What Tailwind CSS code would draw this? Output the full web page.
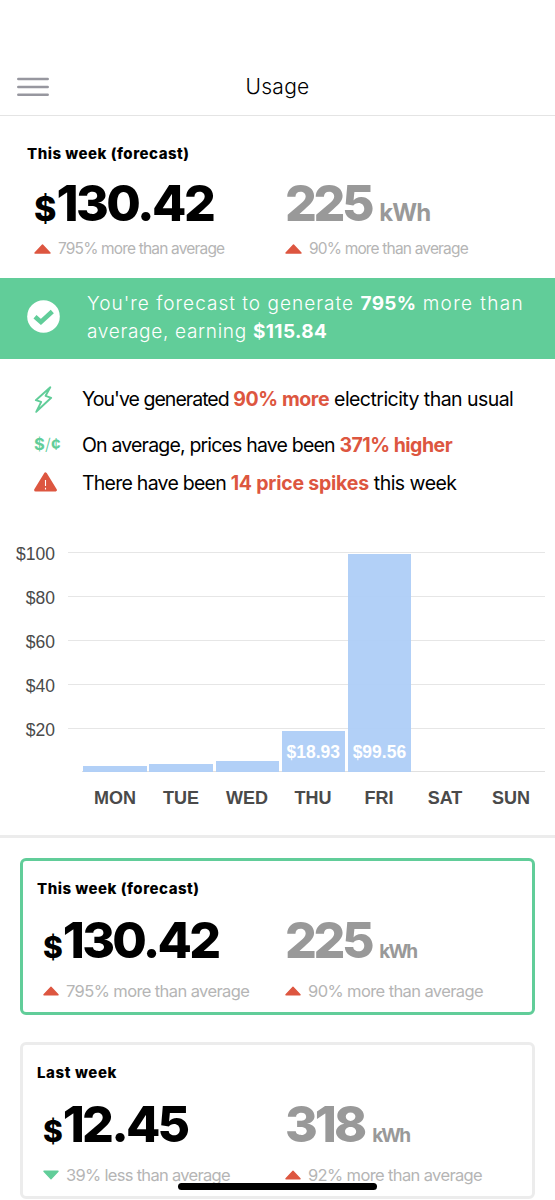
<!DOCTYPE html>
<html lang="en">

<head>
    <meta charset="UTF-8">
    <meta name="viewport" content="width=device-width, initial-scale=1.0">
    <script src="https://cdn.jsdelivr.net/npm/@tailwindcss/browser@4"></script>
    <title>Usage</title>
</head>

<body class="relative h-[1200px] overflow-hidden bg-white font-['Inter',sans-serif] text-black">
    <header class="flex h-[116px] items-end border-b border-[#e4e4e4] px-[17px] pb-[15px]">
        <button class="mb-1 h-5 w-8" aria-label="Menu">
            <svg class="h-5 w-8" viewBox="0 0 32 20"><path d="M1.3 3.1h29.4M1.3 10.9h29.4M1.3 18.7h29.4" stroke="#97979f" stroke-width="2.5" stroke-linecap="round"/></svg>
        </button>
        <h1 class="flex-1 pr-[32px] text-center text-[21px] leading-[26px] font-light tracking-[0.3px]">Usage</h1>
    </header>

    <!-- summary -->
    <section class="h-[162px] pt-7">
        <h2 class="pl-[27px] text-[15px] leading-5 font-extrabold tracking-[0.5px]">This week (forecast)</h2>
        <div class="flex pl-[34px]">
            <div class="w-[251px]">
                <div class="mt-[9px] h-[60px] whitespace-nowrap leading-[60px] font-extrabold"><span class="text-[34px]">$</span><span class="text-[50px] tracking-[-2.5px]">130.42</span></div>
                <div class="mt-1.5 flex h-5 items-center gap-[7px] text-[#b5b5b5]">
                    <svg class="h-[10px] w-[17px]" viewBox="0 0 17 10"><path d="M8.5 1 16 9H1z" fill="#dd5640" stroke="#dd5640" stroke-width="1.4" stroke-linejoin="round"/></svg>
                    <span class="text-[15.5px] tracking-[-0.83px]">795% more than average</span>
                </div>
            </div>
            <div>
                <div class="mt-[9px] h-[60px] whitespace-nowrap leading-[60px] font-extrabold text-[#999]"><span class="text-[50px] tracking-[-3.4px]">225</span><span class="ml-2 text-[24px] font-bold tracking-[-0.9px]">kWh</span></div>
                <div class="mt-1.5 flex h-5 items-center gap-[7px] text-[#b5b5b5]">
                    <svg class="h-[10px] w-[17px]" viewBox="0 0 17 10"><path d="M8.5 1 16 9H1z" fill="#dd5640" stroke="#dd5640" stroke-width="1.4" stroke-linejoin="round"/></svg>
                    <span class="text-[15.5px] tracking-[-0.83px]">90% more than average</span>
                </div>
            </div>
        </div>
    </section>

    <!-- forecast banner -->
    <section class="flex h-[81px] items-center bg-[#61cd99] pl-[27px] text-white">
        <svg class="mt-[-4px] h-[33px] w-[33px]" viewBox="0 0 33 33"><circle cx="16.5" cy="16.5" r="16.3" fill="#fff"/><path d="M8 16.8 13.9 22 25.3 11.5" fill="none" stroke="#61cd99" stroke-width="4.6"/></svg>
        <p class="mt-[-1px] ml-[27px] whitespace-nowrap text-[19px] leading-7 font-light tracking-[1.02px]">You're forecast to generate <b class="font-bold tracking-[0.3px]">795%</b> <span class="tracking-[1.35px]">more than</span><br><span class="tracking-[0.7px]">average, earning </span><b class="font-bold tracking-[0.4px]">$115.84</b></p>
    </section>

    <!-- insights -->
    <section class="pt-[23px] text-[19.5px] whitespace-nowrap">
        <div class="flex h-9 items-center pl-[34px]">
            <svg class="mt-[-1px] h-[27px] w-5" viewBox="0 0 20 27"><path d="M16.3 1.3 1.8 14.2l5.4 1.6L2.2 25.8l15-14-5.6-2z" fill="none" stroke="#61cd99" stroke-width="1.9" stroke-linejoin="round"/></svg>
            <p class="ml-7 tracking-[-0.55px]"><span class="tracking-[-0.97px]">You've generated </span><b class="tracking-[-0.4px] text-[#dd5640]">90% more</b> electricity than usual</p>
        </div>
        <div class="mt-[9px] flex h-9 items-center pl-[34px]">
            <span class="mt-[-2px] w-7 text-[16.5px] font-bold tracking-[0.2px] text-[#61cd99]">$<span class="font-light">/</span>¢</span>
            <p class="mt-px ml-5 tracking-[-0.82px]">On average, prices have been <b class="tracking-[-0.5px] text-[#dd5640]">371% higher</b></p>
        </div>
        <div class="mt-[3px] flex h-9 items-center pl-[34px]">
            <svg class="mt-[-4px] h-5 w-6" viewBox="0 0 24 20"><path d="M11.5 2 21.3 18H1.7z" fill="#dd5640" stroke="#dd5640" stroke-width="3.2" stroke-linejoin="round"/><path d="M11.5 8v6M11.5 15.8v1.6" stroke="#fff" stroke-width="1.1"/></svg>
            <p class="ml-6 tracking-[-0.53px]"><span class="tracking-[-0.75px]">There have been </span><b class="tracking-[-0.22px] text-[#dd5640]">14 price spikes</b> this week</p>
        </div>
    </section>

    <!-- daily chart -->
    <section class="mt-[41px] h-[295px] border-b-[3px] border-[#ececec] font-['Liberation_Sans',sans-serif] text-[#4a4a4a]">
        <div class="flex">
            <div class="grid w-[55px] grid-rows-[repeat(5,44px)] text-right text-[17.5px] leading-[22px]">
                <span>$100</span>
                <span>$80</span>
                <span>$60</span>
                <span>$40</span>
                <span>$20</span>
            </div>
            <div class="relative mt-[9px] ml-[13px] h-[221px] w-[477px]">
                <div class="grid grid-rows-[repeat(5,43.9px)]">
                    <div class="border-t border-[#e6e6e6]"></div>
                    <div class="border-t border-[#e6e6e6]"></div>
                    <div class="border-t border-[#e6e6e6]"></div>
                    <div class="border-t border-[#e6e6e6]"></div>
                    <div class="border-t border-[#e6e6e6]"></div>
                </div>
                <div class="ml-[14px] border-t border-[#e0e0e0]"></div>
                <div class="absolute bottom-px left-[15.4px] flex items-end gap-[2.7px] text-[17.5px] font-bold text-white">
                    <div class="w-[63.4px] bg-[#aecdf7]/95" style="height: 6px"></div>
                    <div class="w-[63.4px] bg-[#aecdf7]/95" style="height: 8px"></div>
                    <div class="w-[63.4px] bg-[#aecdf7]/95" style="height: 11px"></div>
                    <div class="flex w-[63.4px] items-end justify-center bg-[#aecdf7]/95 pb-[7px]" style="height: 41px">$18.93</div>
                    <div class="flex w-[63.4px] items-end justify-center bg-[#aecdf7]/95 pb-[7px]" style="height: 218px">$99.56</div>
                </div>
            </div>
        </div>
        <div class="mt-[14px] ml-[82px] grid grid-cols-[repeat(7,66px)] text-center text-[18px] leading-[22px] font-bold">
            <span>MON</span>
            <span>TUE</span>
            <span>WED</span>
            <span>THU</span>
            <span>FRI</span>
            <span>SAT</span>
            <span>SUN</span>
        </div>
    </section>

    <!-- weeks -->
    <section class="mx-5 mt-[20px] h-[157px] rounded-md border-[3px] border-[#61cd99] pt-[18px]">
        <h2 class="pl-[14px] text-[15px] leading-5 font-extrabold tracking-[0.5px]">This week (forecast)</h2>
        <div class="flex pl-5">
            <div class="w-[242px]">
                <div class="mt-[11px] h-[60px] whitespace-nowrap leading-[60px] font-extrabold"><span class="text-[30px]">$</span><span class="text-[50px] tracking-[-2.7px]">130.42</span></div>
                <div class="mt-[11px] flex h-5 items-center gap-[7px] text-[#b5b5b5]">
                    <svg class="h-[10px] w-4" viewBox="0 0 17 10"><path d="M8.5 1 16 9H1z" fill="#dd5640" stroke="#dd5640" stroke-width="1.4" stroke-linejoin="round"/></svg>
                    <span class="text-[16.5px] tracking-[-0.6px]">795% more than average</span>
                </div>
            </div>
            <div>
                <div class="mt-[11px] h-[60px] whitespace-nowrap leading-[60px] font-extrabold text-[#999]"><span class="text-[50px] tracking-[-3.4px]">225</span><span class="ml-2 text-[19px] font-bold tracking-[-1.8px]">kWh</span></div>
                <div class="mt-[11px] flex h-5 items-center gap-[7px] text-[#b5b5b5]">
                    <svg class="h-[10px] w-4" viewBox="0 0 17 10"><path d="M8.5 1 16 9H1z" fill="#dd5640" stroke="#dd5640" stroke-width="1.4" stroke-linejoin="round"/></svg>
                    <span class="text-[16.5px] tracking-[-0.6px]">90% more than average</span>
                </div>
            </div>
        </div>
    </section>
    <section class="mx-5 mt-[27px] h-[157px] rounded-md border-[3px] border-[#ececec] pt-[18px]">
        <h2 class="pl-[14px] text-[15px] leading-5 font-extrabold tracking-[0.6px]">Last week</h2>
        <div class="flex pl-5">
            <div class="w-[242px]">
                <div class="mt-[11px] h-[60px] whitespace-nowrap leading-[60px] font-extrabold"><span class="text-[30px]">$</span><span class="text-[50px] tracking-[-2.8px]">12.45</span></div>
                <div class="mt-[11px] flex h-5 items-center gap-[7px] text-[#b5b5b5]">
                    <svg class="h-[10px] w-4" viewBox="0 0 17 10"><path d="M8.5 9 16 1H1z" fill="#61cd99" stroke="#61cd99" stroke-width="1.4" stroke-linejoin="round"/></svg>
                    <span class="text-[16.5px] tracking-[-0.7px]">39% less than average</span>
                </div>
            </div>
            <div>
                <div class="mt-[11px] h-[60px] whitespace-nowrap leading-[60px] font-extrabold text-[#999]"><span class="text-[50px] tracking-[-3px]">318</span><span class="ml-2 text-[19px] font-bold tracking-[-1.8px]">kWh</span></div>
                <div class="mt-[11px] flex h-5 items-center gap-[7px] text-[#b5b5b5]">
                    <svg class="h-[10px] w-4" viewBox="0 0 17 10"><path d="M8.5 1 16 9H1z" fill="#dd5640" stroke="#dd5640" stroke-width="1.4" stroke-linejoin="round"/></svg>
                    <span class="text-[16.5px] tracking-[-0.63px]">92% more than average</span>
                </div>
            </div>
        </div>
    </section>

    <!-- home indicator -->
    <div class="absolute top-[1183px] left-[178px] h-[7px] w-[199px] rounded-full bg-black"></div>
</body>

</html>
